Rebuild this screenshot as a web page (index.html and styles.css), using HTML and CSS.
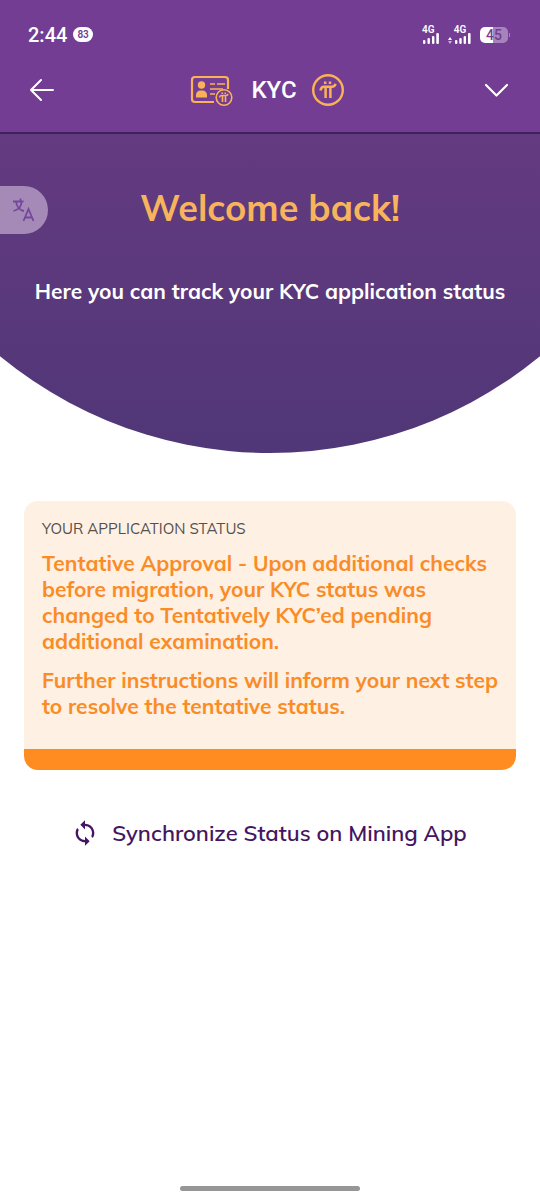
FILE: index.html
```html
<!DOCTYPE html>
<html lang="en">
<head>
<meta charset="utf-8">
<meta name="viewport" content="width=device-width, initial-scale=1">
<title>KYC</title>
<link rel="stylesheet" href="styles.css">
</head>
<body>
<div class="screen">
  <header class="top">
    <div class="status-bar">
      <div class="status-left"><span class="time">2:44</span><span class="count">83</span></div>
      <div class="status-right">
        <div class="signal"><span class="network">4G</span>
          <svg width="18" height="11" viewBox="0 0 18 11" fill="#fff"><rect x="1" y="7" width="2.4" height="4" rx="1"/><rect x="5.5" y="5" width="2.4" height="6" rx="1"/><rect x="10" y="3" width="2.4" height="8" rx="1"/><rect x="14.3" y="0" width="2.6" height="11" rx="1"/></svg>
        </div>
        <div class="signal signal-data"><span class="network">4G</span>
          <svg width="24" height="11" viewBox="0 0 24 11" fill="#fff"><path d="M0 7l2-3 2 3z"/><path d="M0 8l2 3 2-3z" opacity=".6"/><rect x="7" y="7" width="2.4" height="4" rx="1"/><rect x="11.3" y="5" width="2.4" height="6" rx="1"/><rect x="15.6" y="3" width="2.4" height="8" rx="1"/><rect x="20" y="0" width="2.6" height="11" rx="1"/></svg>
        </div>
        <div class="battery"><span class="battery-level">45</span><span class="battery-tip"></span></div>
      </div>
    </div>
    <nav class="nav">
      <button class="icon-button" type="button" aria-label="Back">
        <svg width="28" height="28" viewBox="0 0 28 28" fill="none" stroke="#fff" stroke-width="2" stroke-linecap="round" stroke-linejoin="round"><path d="M25 14H3M13 4L3 14l10 10"/></svg>
      </button>
      <div class="brand">
        <svg width="44" height="36" viewBox="0 0 44 36" fill="none" stroke="#fbb257">
          <path stroke-width="2.2" d="M25 30H6a3 3 0 0 1-3-3V8a3 3 0 0 1 3-3h30a3 3 0 0 1 3 3v9"/>
          <g fill="#fbb257" stroke="none"><circle cx="12.500" cy="13" r="3.700"/><path d="M7 25.500v-2.500a4.500 4.500 0 0 1 4.500-4.500h2a4.500 4.500 0 0 1 4.500 4.500v2.500z"/></g>
          <path stroke-width="1.600" d="M21 12h5M28 12h8M21 17h13M21 22h5"/>
          <circle cx="35" cy="25.500" r="7.800" stroke-width="1.600"/>
          <path stroke-width="1.600" d="M30.500 25.500q.3-2 2-2h4.500q1.700 0 2-1.500M33.500 23.500V30M36.500 23.500V30M33.300 20.500v1.500M36.300 20.500v1.500"/>
        </svg>
        <h1 class="brand-name">KYC</h1>
        <svg width="34" height="34" viewBox="0 0 34 34" fill="none" stroke="#fbb257">
          <circle cx="17" cy="17" r="14.800" stroke-width="2.400"/>
          <path stroke-width="2.500" d="M9.500 17.500q.5-3.800 3.500-3.800h8q2.800 0 3.500-3M14.600 14v11M19.400 14v11M14.200 8.500v2.500M19 8.500v2.500"/>
        </svg>
      </div>
      <button class="icon-button" type="button" aria-label="Menu">
        <svg width="28" height="28" viewBox="0 0 28 28" fill="none" stroke="#fff" stroke-width="2.200" stroke-linecap="round" stroke-linejoin="round"><path d="M4 9l10.500 10.500L25 9"/></svg>
      </button>
    </nav>
  </header>
  <main class="main">
    <section class="hero">
      <button class="translate" type="button" aria-label="Translate">
        <svg width="24" height="26" viewBox="0 0 24 26" fill="none" stroke="#75479a" stroke-width="1.800"><path d="M1 4.500h10.500M8.500 1.500v3M4 4.500Q5 12.500 12 14M9.500 4.500Q9.500 12 1.500 14"/><path d="M11.500 24l5-12 5 12M13 20.500h7"/></svg>
      </button>
      <h2 class="welcome">Welcome back!</h2>
      <p class="intro">Here you can track your KYC application status</p>
    </section>
    <section class="card">
      <h3 class="card-label">YOUR APPLICATION STATUS</h3>
      <p class="card-text">Tentative Approval - Upon additional checks before migration, your KYC status was changed to Tentatively KYC’ed pending additional examination.</p>
      <p class="card-text">Further instructions will inform your next step to resolve the tentative status.</p>
    </section>
    <button class="sync" type="button">
      <svg width="24" height="28" viewBox="2 0 20 24" fill="#451561"><path d="M12 4V1L8 5l4 4V6c3.310 0 6 2.690 6 6 0 1.010-.250 1.970-.700 2.800l1.460 1.460C19.540 15.030 20 13.570 20 12c0-4.420-3.580-8-8-8zm0 14c-3.310 0-6-2.690-6-6 0-1.010.250-1.970.700-2.800L5.240 7.740C4.460 8.970 4 10.430 4 12c0 4.420 3.580 8 8 8v3l4-4-4-4v3z"/></svg>
      <span>Synchronize Status on Mining App</span>
    </button>
  </main>
  <div class="home-bar"></div>
</div>
</body>
</html>
```
FILE: styles.css
```css
* { box-sizing: border-box; }
body {
  margin: 0;
  background: #fff;
  font-family: "Mulish", "Open Sans", "Noto Sans", sans-serif;
}
h1, h2, h3, p { margin: 0; }
svg { display: block; flex: none; }
button {
  padding: 0;
  border: 0;
  background: none;
  font: inherit;
  cursor: pointer;
}
.screen {
  display: flex;
  flex-direction: column;
  min-height: 100vh;
}
.top {
  padding: 20px 30px 1px 28px;
  background: #733d93;
  border-bottom: 2px solid #42205e;
  color: #fff;
  font-family: Roboto, sans-serif;
}
.status-bar {
  display: flex;
  justify-content: space-between;
  height: 29px;
}
.status-left, .status-right { display: flex; align-items: center; }
.status-left { gap: 6px; }
.time { font-size: 20px; font-weight: 500; }
.count {
  padding: 0 4px;
  border-radius: 8px;
  background: #fff;
  color: #733d93;
  font-size: 10px;
  font-weight: 600;
  line-height: 15px;
}
.status-right { gap: 8px; padding-right: 2px; }
.signal {
  display: flex;
  flex-direction: column;
  height: 18px;
}
.signal-data { align-items: center; }
.network {
  font-size: 10px;
  font-weight: 600;
  line-height: 7px;
}
.battery {
  position: relative;
  width: 28px;
  border-radius: 5px;
  background: linear-gradient(90deg, #fff 45%, #a783bb 45%);
  color: #733d93;
  font-size: 14px;
  font-weight: 500;
  line-height: 16px;
  text-align: center;
}
.battery-level { display: block; }
.battery-tip {
  position: absolute;
  top: 6px;
  right: -2px;
  width: 1px;
  height: 4px;
  background: #a783bb;
}
.nav {
  display: flex;
  align-items: center;
  justify-content: space-between;
  height: 82px;
}
.icon-button { width: 28px; height: 28px; }
.brand { display: flex; align-items: center; gap: 14px; padding-right: 4px; }
.brand-name {
  padding-left: 4px;
  font-size: 24px;
  font-weight: 500;
  line-height: 28px;
}
.main {
  display: flex;
  flex: 1;
  flex-direction: column;
}
.hero {
  position: relative;
  padding: 50px 16px 146px;
  background: linear-gradient(#643a80, #503777);
  clip-path: ellipse(79% 428px at 50% calc(100% - 428px));
  text-align: center;
}
.translate {
  position: absolute;
  top: 52px;
  left: 0;
  display: flex;
  align-items: center;
  width: 48px;
  height: 48px;
  padding-left: 12px;
  border-radius: 0 24px 24px 0;
  background: #a58ab8;
}
.welcome {
  color: #f7b45c;
  font-size: 36px;
  font-weight: 700;
  line-height: 48px;
}
.intro {
  margin-top: 43px;
  color: #fff;
  font-size: 21px;
  font-weight: 700;
  line-height: 32px;
}
.card {
  margin: 48px 24px 0;
  padding: 16px 16px 30px 18px;
  border-bottom: 21px solid #ff8c20;
  border-radius: 14px;
  background: #fef0e3;
}
.card-label {
  color: #55504e;
  font-size: 15px;
  font-weight: 400;
  line-height: 24px;
}
.card-text {
  margin-top: 9px;
  color: #fa8c28;
  font-size: 21px;
  font-weight: 700;
  line-height: 26px;
}
.card-text + .card-text { margin-top: 13px; }
.sync {
  display: flex;
  align-items: center;
  align-self: center;
  gap: 15px;
  margin-top: 47px;
  color: #451561;
  font-size: 22px;
  font-weight: 600;
  line-height: 32px;
}
.home-bar {
  align-self: center;
  width: 33.333%;
  height: 5px;
  margin-bottom: 9px;
  border-radius: 3px;
  background: #969696;
}
```
